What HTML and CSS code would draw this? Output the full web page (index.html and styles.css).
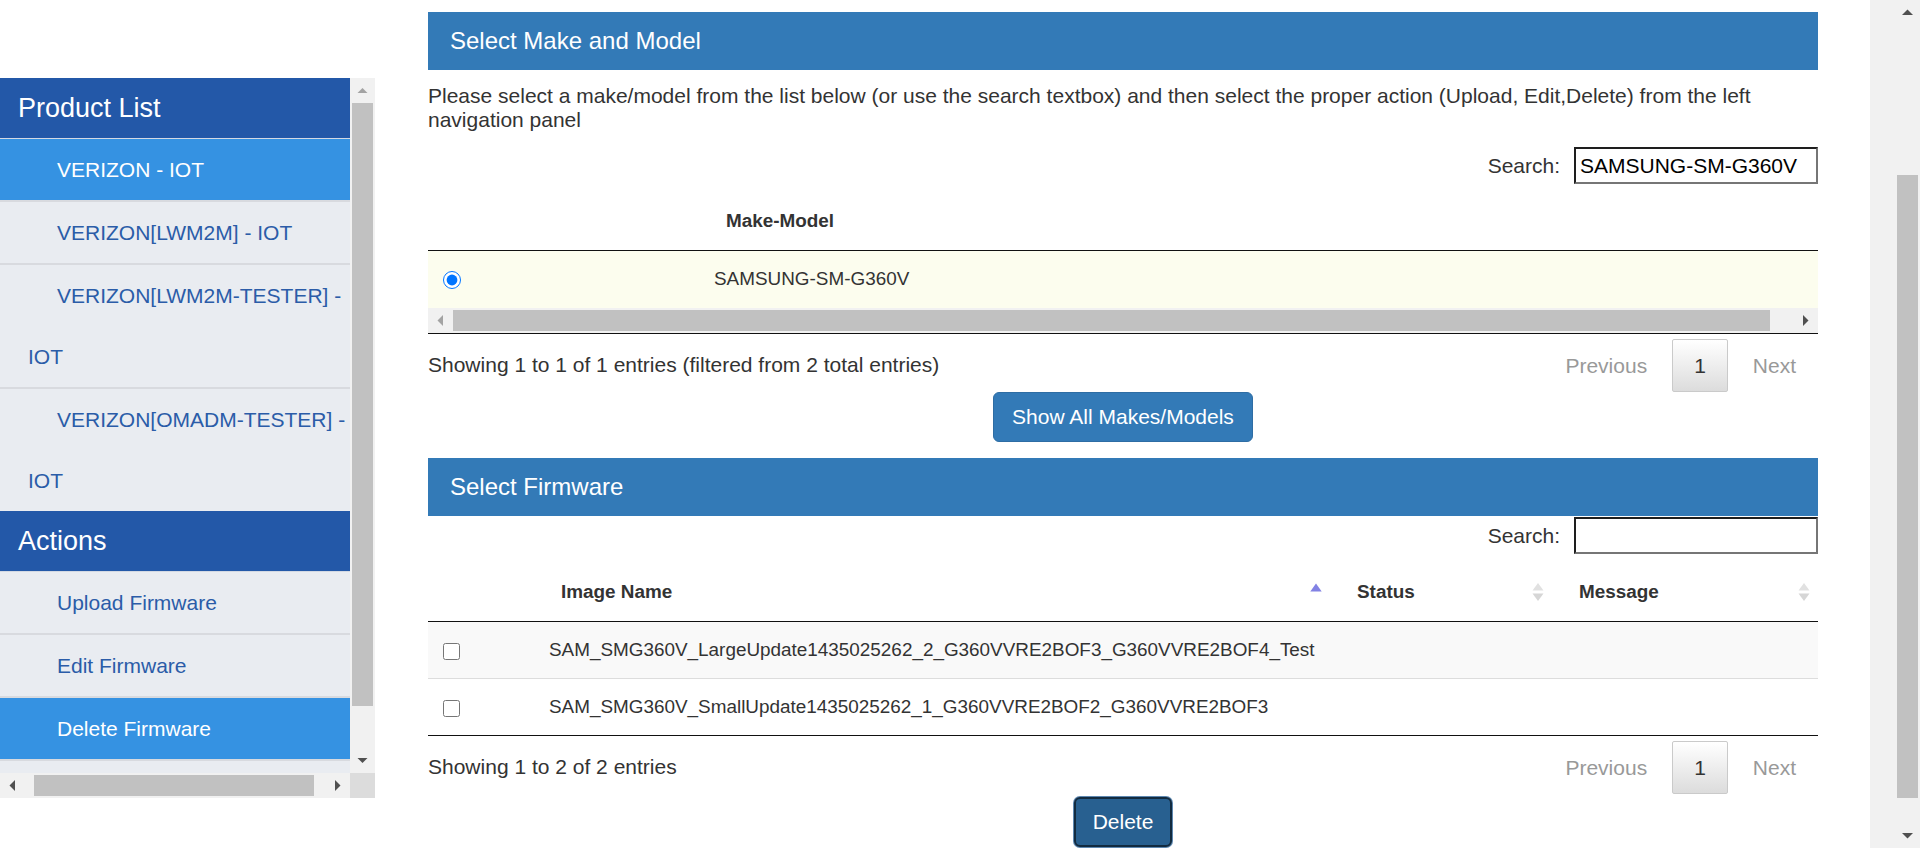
FILE: index.html
```html
<!DOCTYPE html>
<html lang="en">
<head>
<meta charset="utf-8">
<title>Delete Firmware</title>
<link rel="stylesheet" href="styles.css">
</head>
<body>
<div class="layout">
  <aside class="side">
    <div class="side-top">
      <nav class="side-content">
        <div class="nav-head">Product List</div>
        <a class="nav-item active">VERIZON - IOT</a>
        <a class="nav-item">VERIZON[LWM2M] - IOT</a>
        <a class="nav-item">VERIZON[LWM2M-TESTER] - IOT</a>
        <a class="nav-item last">VERIZON[OMADM-TESTER] - IOT</a>
        <div class="nav-head">Actions</div>
        <a class="nav-item">Upload Firmware</a>
        <a class="nav-item">Edit Firmware</a>
        <a class="nav-item active">Delete Firmware</a>
      </nav>
      <div class="vbar">
        <div class="sb-btn"><svg width="25" height="25" viewBox="0 0 25 25"><polygon points="7.5,15 12.5,10 17.5,15" fill="#a3a3a3"/></svg></div>
        <div class="vtrack"><div class="vthumb side-vthumb"></div></div>
        <div class="sb-btn"><svg width="25" height="25" viewBox="0 0 25 25"><polygon points="7.5,10 12.5,15 17.5,10" fill="#505050"/></svg></div>
      </div>
    </div>
    <div class="side-bottom">
      <div class="hbar">
        <div class="sb-btn"><svg width="25" height="25" viewBox="0 0 25 25"><polygon points="15,7 9.5,12.5 15,18" fill="#505050"/></svg></div>
        <div class="htrack"><div class="hthumb side-hthumb"></div></div>
        <div class="sb-btn"><svg width="25" height="25" viewBox="0 0 25 25"><polygon points="10,7 15.5,12.5 10,18" fill="#505050"/></svg></div>
      </div>
      <div class="corner"></div>
    </div>
  </aside>

  <main class="main">
    <div class="panel-heading">Select Make and Model</div>
    <p class="intro">Please select a make/model from the list below (or use the search textbox) and then select the proper action (Upload, Edit,Delete) from the left navigation panel</p>
    <div class="search-row">
      <label class="search-label">Search:</label>
      <input class="search-input" type="text" value="SAMSUNG-SM-G360V">
    </div>

    <div class="mm-wrap">
      <div class="mm-clip">
        <table class="dt mm-table">
          <colgroup><col class="mm-c1"><col class="mm-c2"></colgroup>
          <thead>
            <tr><th></th><th>Make-Model</th></tr>
          </thead>
          <tbody>
            <tr class="selected">
              <td><input class="radio" type="radio" name="mm" checked></td>
              <td>SAMSUNG-SM-G360V</td>
            </tr>
          </tbody>
        </table>
      </div>
      <div class="tscroll">
        <div class="sb-btn"><svg width="25" height="25" viewBox="0 0 25 25"><polygon points="15,7 9.5,12.5 15,18" fill="#a3a3a3"/></svg></div>
        <div class="htrack"><div class="hthumb table-hthumb"></div></div>
        <div class="sb-btn"><svg width="25" height="25" viewBox="0 0 25 25"><polygon points="10,7 15.5,12.5 10,18" fill="#505050"/></svg></div>
      </div>
    </div>

    <div class="dt-footer">
      <div class="info">Showing 1 to 1 of 1 entries (filtered from 2 total entries)</div>
      <div class="paginate">
        <span class="pbtn">Previous</span>
        <span class="pbtn current">1</span>
        <span class="pbtn">Next</span>
      </div>
    </div>
    <div class="btn-row">
      <button class="btn btn-primary" type="button">Show All Makes/Models</button>
    </div>

    <div class="panel-heading second">Select Firmware</div>
    <div class="search-row tight">
      <label class="search-label">Search:</label>
      <input class="search-input" type="text" value="">
    </div>

    <table class="dt fw-table">
      <colgroup><col class="fw-c1"><col class="fw-c2"><col class="fw-c3"><col class="fw-c4"></colgroup>
      <thead>
        <tr>
          <th></th>
          <th><div class="th-inner"><span class="th-text">Image Name</span><svg class="sort-ico" width="28" height="22" viewBox="0 0 28 22"><polygon points="8.3,10.5 14,2.5 19.7,10.5" fill="#8282e4"/></svg></div></th>
          <th><div class="th-inner"><span class="th-text">Status</span><svg class="sort-ico" width="28" height="22" viewBox="0 0 28 22"><polygon points="8.5,9.5 14,2 19.5,9.5" fill="#e1e1e1"/><polygon points="8.5,12.5 14,20 19.5,12.5" fill="#d6d6d6"/></svg></div></th>
          <th><div class="th-inner"><span class="th-text">Message</span><svg class="sort-ico" width="28" height="22" viewBox="0 0 28 22"><polygon points="8.5,9.5 14,2 19.5,9.5" fill="#e1e1e1"/><polygon points="8.5,12.5 14,20 19.5,12.5" fill="#d6d6d6"/></svg></div></th>
        </tr>
      </thead>
      <tbody>
        <tr class="odd">
          <td><input class="cb" type="checkbox"></td>
          <td>SAM_SMG360V_LargeUpdate1435025262_2_G360VVRE2BOF3_G360VVRE2BOF4_Test</td>
          <td></td>
          <td></td>
        </tr>
        <tr>
          <td><input class="cb" type="checkbox"></td>
          <td>SAM_SMG360V_SmallUpdate1435025262_1_G360VVRE2BOF2_G360VVRE2BOF3</td>
          <td></td>
          <td></td>
        </tr>
      </tbody>
    </table>

    <div class="dt-footer">
      <div class="info">Showing 1 to 2 of 2 entries</div>
      <div class="paginate">
        <span class="pbtn">Previous</span>
        <span class="pbtn current">1</span>
        <span class="pbtn">Next</span>
      </div>
    </div>
    <div class="btn-row delete-row">
      <button class="btn btn-delete" type="button">Delete</button>
    </div>
  </main>

  <div class="spacer"></div>

  <div class="page-scroll">
    <div class="vbar page-vbar">
      <div class="sb-btn"><svg width="25" height="25" viewBox="0 0 25 25"><polygon points="7,15 12.5,9.5 18,15" fill="#505050"/></svg></div>
      <div class="vtrack"><div class="vthumb page-vthumb"></div></div>
      <div class="sb-btn"><svg width="25" height="25" viewBox="0 0 25 25"><polygon points="7,10 12.5,15.5 18,10" fill="#505050"/></svg></div>
    </div>
  </div>
</div>
</body>
</html>
```

FILE: styles.css
```css
html, body {
  margin: 0;
  padding: 0;
}

body {
  font-family: "Liberation Sans", Arial, Helvetica, sans-serif;
  color: #333;
  background: #fff;
  overflow: hidden;
}

.layout {
  display: flex;
  height: 848px;
  overflow: hidden;
}

/* ---------- sidebar ---------- */
.side {
  flex: none;
  width: 375px;
  height: 720px;
  margin-top: 78px;
  display: flex;
  flex-direction: column;
}

.side-top {
  display: flex;
  height: 695px;
}

.side-content {
  width: 350px;
  flex: none;
  background: #e9ecf1;
  overflow: hidden;
  display: flex;
  flex-direction: column;
}

.nav-head {
  flex: none;
  height: 60px;
  line-height: 60px;
  padding-left: 18px;
  background: #2358a8;
  color: #fff;
  font-size: 27px;
  border-bottom: 1px solid #d3d9e3;
}

.nav-item {
  display: block;
  flex: none;
  font-size: 21px;
  line-height: 61px;
  padding-left: 28px;
  text-indent: 29px;
  color: #2b5ca8;
  text-decoration: none;
  border-bottom: 2px solid #d8dadf;
}

.nav-item.active {
  background: #3592e2;
  color: #fff;
}

.nav-item.last {
  border-bottom: none;
}

/* ---------- fake scrollbars ---------- */
.vbar {
  width: 25px;
  flex: none;
  background: #f1f1f1;
  display: flex;
  flex-direction: column;
}

.sb-btn {
  width: 25px;
  height: 25px;
  flex: none;
  display: flex;
  align-items: center;
  justify-content: center;
}

.sb-btn svg {
  display: block;
}

.vtrack {
  flex: 1;
  padding: 0 2px;
}

.vthumb {
  background: #c1c1c1;
}

.side-vthumb {
  height: 603px;
}

.side-bottom {
  display: flex;
  height: 25px;
}

.hbar {
  width: 350px;
  display: flex;
  background: #f1f1f1;
}

.htrack {
  flex: 1;
  padding: 2px 0;
}

.hthumb {
  height: 100%;
  background: #c1c1c1;
}

.side-hthumb {
  margin-left: 9px;
  width: 280px;
}

.corner {
  width: 25px;
  background: #dcdcdc;
}

.spacer {
  flex: 1;
}

.page-scroll {
  flex: none;
  width: 50px;
  background: #f1f1f1;
  display: flex;
  justify-content: flex-end;
}

.page-vbar {
  background: transparent;
}

.page-vthumb {
  margin-top: 150px;
  height: 623px;
}

/* ---------- main ---------- */
.main {
  flex: none;
  width: 1390px;
  margin-left: 53px;
}

.panel-heading {
  height: 58px;
  margin-top: 12px;
  padding-left: 22px;
  display: flex;
  align-items: center;
  background: #337ab7;
  color: #fff;
  font-size: 24px;
}

.panel-heading.second {
  margin-top: 16px;
}

.intro {
  margin: 14px 0 0;
  font-size: 21px;
  line-height: 24px;
  color: #333;
}

.search-row {
  display: flex;
  justify-content: flex-end;
  align-items: center;
  margin-top: 15px;
  font-size: 21px;
}

.search-row.tight {
  margin-top: 1px;
}

.search-input {
  width: 244px;
  height: 37px;
  box-sizing: border-box;
  margin: 0 0 0 14px;
  padding: 1px 4px;
  font: 21px "Liberation Sans", Arial, sans-serif;
  color: #000;
  background: #fff;
  border-width: 2px;
  border-style: solid;
  border-color: #1e1e1e #767676 #767676 #1e1e1e;
  outline: none;
}

/* ---------- tables ---------- */
.dt {
  border-collapse: separate;
  border-spacing: 0;
  font-size: 18.9px;
  color: #333;
}

.dt th {
  font-weight: bold;
  text-align: left;
  line-height: 22px;
  padding: 14px 0 18px 27px;
  border-bottom: 1px solid #111;
}

.dt td {
  line-height: 33px;
  padding: 11px 15px 12px;
  white-space: nowrap;
}

.mm-wrap {
  margin-top: 12px;
  border-bottom: 1px solid #111;
}

.mm-clip {
  overflow: hidden;
}

.mm-table {
  width: 1414px;
  table-layout: fixed;
}

.mm-c1 {
  width: 271px;
}

.mm-table td {
  padding-bottom: 13px;
}

.mm-table tr.selected td {
  background: #fcfdee;
}

.tscroll {
  display: flex;
  height: 25px;
  background: #f1f1f1;
}

.table-hthumb {
  width: calc(100% - 23px);
}

.fw-table {
  width: 100%;
  table-layout: fixed;
  margin-top: 13px;
  border-bottom: 1px solid #111;
}

.fw-c1 { width: 106px; }
.fw-c2 { width: 796px; }
.fw-c3 { width: 222px; }
.fw-c4 { width: 266px; }

.fw-table tbody tr.odd td {
  background: #f9f9f9;
}

.fw-table tbody tr + tr td {
  border-top: 1px solid #ddd;
}

.th-inner {
  display: flex;
  align-items: center;
}

.th-text {
  flex: 1;
}

.sort-ico {
  flex: none;
  display: block;
}

.radio {
  width: 18px;
  height: 18px;
  margin: 0;
  vertical-align: middle;
}

.cb {
  width: 17px;
  height: 17px;
  margin: 0;
  vertical-align: middle;
}

/* ---------- footer rows ---------- */
.dt-footer {
  display: flex;
  justify-content: space-between;
  align-items: flex-start;
  font-size: 21px;
  color: #333;
}

.info {
  padding-top: 16px;
  line-height: 30px;
}

.paginate {
  padding-top: 5px;
  display: flex;
}

.pbtn {
  padding: 10.5px 21px;
  line-height: 30px;
  border: 1px solid transparent;
  margin-left: 3px;
  color: #999;
}

.pbtn.current {
  border-color: #cacaca;
  border-radius: 2px;
  background: linear-gradient(#ffffff, #dcdcdc);
  color: #333;
}

.btn-row {
  display: flex;
  justify-content: center;
}

.btn {
  font: 21px/30px "Liberation Sans", Arial, sans-serif;
  padding: 9px 18px;
  border-radius: 6px;
  color: #fff;
  cursor: pointer;
}

.btn-primary {
  background: #337ab7;
  border: 1px solid #2e6da4;
}

.delete-row {
  margin-top: 3px;
}

.btn-delete {
  background: #286090;
  border: 2px solid #122b40;
  padding: 8px 17px;
  box-shadow: 0 0 0 1px #5d87b0;
}
```
